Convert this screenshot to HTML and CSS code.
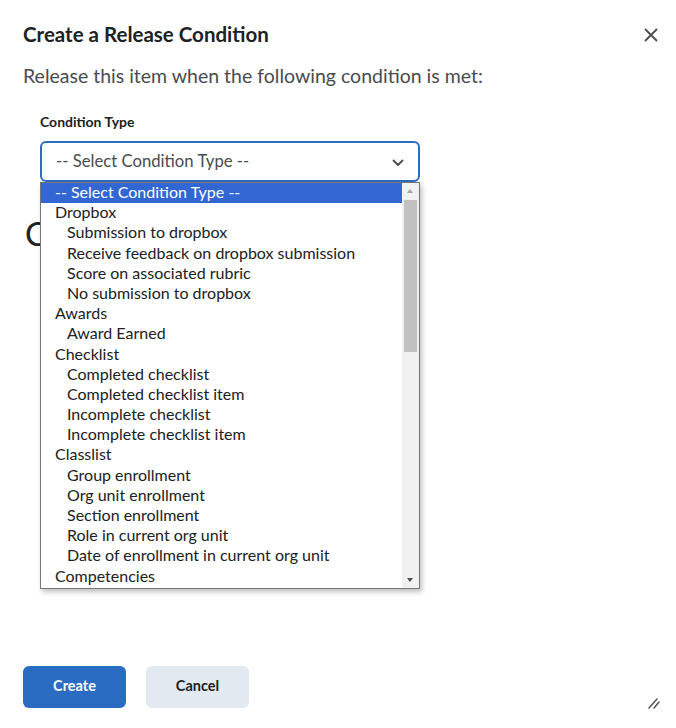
FILE: index.html
```html
<!DOCTYPE html>
<html lang="en">
<head>
<meta charset="utf-8">
<title>Create a Release Condition</title>
<link rel="stylesheet" href="styles.css">
</head>
<body>
<div class="dialog">
  <div class="header">
    <h1 class="title">Create a Release Condition</h1>
    <button class="close" aria-label="Close">
      <svg width="14" height="14" viewBox="0 0 14 14"><path d="M1.5 1.5L12.5 12.5M12.5 1.5L1.5 12.5" stroke="#494c4e" stroke-width="1.8" stroke-linecap="round"/></svg>
    </button>
  </div>
  <p class="lead">Release this item when the following condition is met:</p>

  <div class="field">
    <label class="label">Condition Type</label>
    <div class="select-wrap">
      <div class="select">
        <span>-- Select Condition Type --</span>
        <svg class="chev" width="12" height="8" viewBox="0 0 12 8"><path d="M1.5 1.5L6 6L10.5 1.5" fill="none" stroke="#494c4e" stroke-width="1.8" stroke-linecap="round" stroke-linejoin="round"/></svg>
      </div>
      <div class="listbox">
        <ul class="options">
          <li class="opt selected">-- Select Condition Type --</li>
          <li class="opt group">Dropbox</li>
          <li class="opt">Submission to dropbox</li>
          <li class="opt">Receive feedback on dropbox submission</li>
          <li class="opt">Score on associated rubric</li>
          <li class="opt">No submission to dropbox</li>
          <li class="opt group">Awards</li>
          <li class="opt">Award Earned</li>
          <li class="opt group">Checklist</li>
          <li class="opt">Completed checklist</li>
          <li class="opt">Completed checklist item</li>
          <li class="opt">Incomplete checklist</li>
          <li class="opt">Incomplete checklist item</li>
          <li class="opt group">Classlist</li>
          <li class="opt">Group enrollment</li>
          <li class="opt">Org unit enrollment</li>
          <li class="opt">Section enrollment</li>
          <li class="opt">Role in current org unit</li>
          <li class="opt">Date of enrollment in current org unit</li>
          <li class="opt group">Competencies</li>
        </ul>
        <div class="scrollbar">
          <div class="arrow up"></div>
          <div class="track"><div class="thumb"></div></div>
          <div class="arrow down"></div>
        </div>
      </div>
    </div>
  </div>

  <h2 class="section-heading">Conditions</h2>

  <div class="footer">
    <button class="btn primary">Create</button>
    <button class="btn secondary">Cancel</button>
  </div>
  <svg class="resize" width="14" height="12" viewBox="0 0 14 12"><path d="M2 11L10 2M7 11L12 5" stroke="#565a5c" stroke-width="1.6" stroke-linecap="round"/></svg>
</div>
</body>
</html>
```

FILE: styles.css
```css
* { box-sizing: border-box; }
html, body { margin: 0; padding: 0; }
body {
  font-family: Lato, "Noto Sans", sans-serif;
  color: #202122;
  background: #fff;
}
.dialog {
  position: relative;
  min-height: 728px;
  padding: 22px 23px 20px 23px;
  display: flex;
  flex-direction: column;
}
.header {
  display: flex;
  justify-content: space-between;
  align-items: center;
}
.title {
  margin: 0;
  font-size: 20.5px;
  font-weight: 700;
  line-height: 24px;
  color: #202122;
}
.close {
  border: 0;
  background: none;
  padding: 0;
  width: 20px;
  height: 20px;
  display: flex;
  align-items: center;
  justify-content: center;
  margin-right: -8px;
  margin-top: 2px;
}
.lead {
  margin: 17px 0 0 0;
  font-size: 19.5px;
  line-height: 26px;
  color: #494c4e;
}
.field {
  margin: 24px 0 0 17px;
  width: 380px;
}
.label {
  display: block;
  font-size: 14px;
  font-weight: 700;
  line-height: 18px;
  color: #202122;
}
.select-wrap {
  position: relative;
  margin-top: 10px;
}
.select {
  height: 41px;
  border: 2px solid #2b6cc4;
  border-radius: 6px;
  display: flex;
  align-items: center;
  justify-content: space-between;
  padding: 0 14px 0 14px;
  font-size: 16.7px;
  color: #494c4e;
}
.select span { margin-top: -1px; }
.chev { margin-top: 2px; }
.listbox {
  position: absolute;
  left: 0;
  top: 41px;
  width: 380px;
  height: 407px;
  background: #fff;
  border: 1px solid #767676;
  box-shadow: 2px 3px 5px rgba(0,0,0,0.25);
  display: flex;
  z-index: 2;
}
.options {
  list-style: none;
  margin: 0;
  padding: 0;
  flex: 1;
}
.opt {
  height: 20.2px;
  line-height: 17px;
  font-size: 16px;
  padding-left: 26px;
  color: #202122;
  white-space: nowrap;
}
.opt.group { padding-left: 14px; }
.opt.selected {
  background: #3266d2;
  color: #fff;
  padding-left: 14px;
}
.scrollbar {
  width: 17px;
  background: #f1f1f1;
  display: flex;
  flex-direction: column;
}
.arrow {
  height: 17px;
  position: relative;
}
.arrow::after {
  content: "";
  position: absolute;
  left: 5px;
  width: 0;
  height: 0;
  border-left: 3.5px solid transparent;
  border-right: 3.5px solid transparent;
}
.arrow.up::after { top: 6px; border-bottom: 4px solid #a3a3a3; }
.arrow.down::after { top: 7px; border-top: 4px solid #505050; }
.track { flex: 1; padding: 0 2px; }
.thumb {
  height: 152px;
  background: #c1c1c1;
}
.section-heading {
  margin: 31px 0 0 2px;
  font-size: 33px;
  font-weight: 400;
  line-height: 40px;
  color: #202122;
}
.footer {
  margin-top: auto;
  display: flex;
  gap: 20px;
}
.btn {
  width: 103px;
  height: 42px;
  border: 0;
  border-radius: 6px;
  font-family: Lato, "Noto Sans", sans-serif;
  font-size: 14.5px;
  font-weight: 700;
  padding: 0 0 4px 0;
}
.btn.primary { background: #2a6cc2; color: #fff; }
.btn.secondary { background: #e3e9f1; color: #202122; }
.resize {
  position: absolute;
  right: 15px;
  bottom: 19px;
}
```
